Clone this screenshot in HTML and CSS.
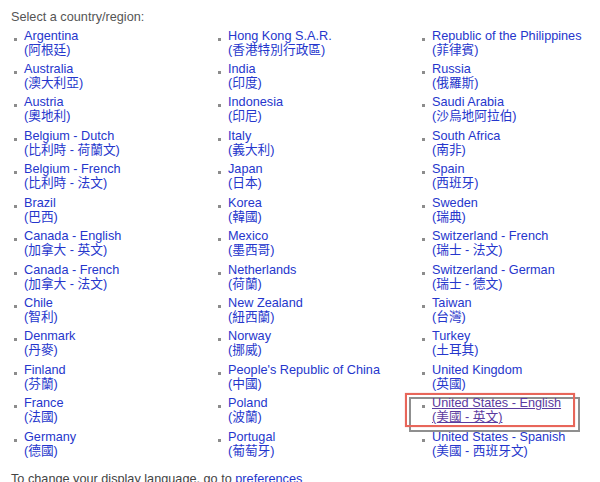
FILE: index.html
```html
<!DOCTYPE html>
<html lang="en">
<head>
    <meta charset="UTF-8">
    <title>Select a country/region</title>
    <link rel="stylesheet" href="styles.css">
</head>
<body>

    <p class="intro">Select a country/region:</p>

    <ul class="region-list">
        <li><a href="#">Argentina<br>(阿根廷)</a></li>
        <li><a href="#">Australia<br>(澳大利亞)</a></li>
        <li><a href="#">Austria<br>(奧地利)</a></li>
        <li><a href="#">Belgium - Dutch<br>(比利時 - 荷蘭文)</a></li>
        <li><a href="#">Belgium - French<br>(比利時 - 法文)</a></li>
        <li><a href="#">Brazil<br>(巴西)</a></li>
        <li><a href="#">Canada - English<br>(加拿大 - 英文)</a></li>
        <li><a href="#">Canada - French<br>(加拿大 - 法文)</a></li>
        <li><a href="#">Chile<br>(智利)</a></li>
        <li><a href="#">Denmark<br>(丹麥)</a></li>
        <li><a href="#">Finland<br>(芬蘭)</a></li>
        <li><a href="#">France<br>(法國)</a></li>
        <li><a href="#">Germany<br>(德國)</a></li>

        <li><a href="#">Hong Kong S.A.R.<br>(香港特別行政區)</a></li>
        <li><a href="#">India<br>(印度)</a></li>
        <li><a href="#">Indonesia<br>(印尼)</a></li>
        <li><a href="#">Italy<br>(義大利)</a></li>
        <li><a href="#">Japan<br>(日本)</a></li>
        <li><a href="#">Korea<br>(韓國)</a></li>
        <li><a href="#">Mexico<br>(墨西哥)</a></li>
        <li><a href="#">Netherlands<br>(荷蘭)</a></li>
        <li><a href="#">New Zealand<br>(紐西蘭)</a></li>
        <li><a href="#">Norway<br>(挪威)</a></li>
        <li><a href="#">People's Republic of China<br>(中國)</a></li>
        <li><a href="#">Poland<br>(波蘭)</a></li>
        <li><a href="#">Portugal<br>(葡萄牙)</a></li>

        <li><a href="#">Republic of the Philippines<br>(菲律賓)</a></li>
        <li><a href="#">Russia<br>(俄羅斯)</a></li>
        <li><a href="#">Saudi Arabia<br>(沙烏地阿拉伯)</a></li>
        <li><a href="#">South Africa<br>(南非)</a></li>
        <li><a href="#">Spain<br>(西班牙)</a></li>
        <li><a href="#">Sweden<br>(瑞典)</a></li>
        <li><a href="#">Switzerland - French<br>(瑞士 - 法文)</a></li>
        <li><a href="#">Switzerland - German<br>(瑞士 - 德文)</a></li>
        <li><a href="#">Taiwan<br>(台灣)</a></li>
        <li><a href="#">Turkey<br>(土耳其)</a></li>
        <li><a href="#">United Kingdom<br>(英國)</a></li>
        <li class="selected">
            <!-- highlight drawn over the current choice -->
            <span class="highlight-shadow"></span>
            <span class="highlight"></span>
            <a href="#" class="visited">United States - English<br>(美國 - 英文)</a>
        </li>
        <li><a href="#">United States - Spanish<br>(美國 - 西班牙文)</a></li>
    </ul>

    <p class="footer-note">To change your display language, go to <a href="#">preferences</a></p>

</body>
</html>
```

FILE: styles.css
```css
body {
    margin: 0;
    padding: 9.5px 0 0 11px;
    font-family: "Liberation Sans", Arial, "Noto Sans CJK TC", sans-serif;
    font-size: 12.7px;
    line-height: 14px;
    color: #555;
    background: #fff;
    overflow: hidden;
}

p {
    margin: 0;
}

a {
    color: #2536cc;
    text-decoration: none;
}

.intro {
    margin-bottom: 5px;
}

.region-list {
    list-style: none;
    margin: 0;
    padding: 0 0 0 3px;
    display: grid;
    grid-template-columns: repeat(3, 204px);
    grid-template-rows: repeat(13, 28px);
    grid-auto-flow: column;
    row-gap: 5.45px;
}

.region-list li {
    display: flex;
    align-items: flex-start;
    white-space: nowrap;
}

/* small gray square bullet */
.region-list li::before {
    content: "";
    flex: none;
    width: 3px;
    height: 3px;
    margin: 9px 7px 0 0;
    background: #8c8c8c;
}

.selected {
    position: relative;
}

.selected .visited {
    color: #5b3a9e;
    text-decoration: underline;
    position: relative;
}

.highlight {
    position: absolute;
    left: -17px;
    top: -3px;
    width: 166px;
    height: 30px;
    border: 2px solid #e8665a;
    box-shadow: 0 0 1px rgba(232, 102, 90, 0.6);
}

.highlight-shadow {
    position: absolute;
    left: -13px;
    top: 1px;
    width: 167px;
    height: 31px;
    border: 2px solid #8f8f8f;
    filter: blur(0.6px);
}

.footer-note {
    margin-top: 14.7px;
    color: #444;
}
```
